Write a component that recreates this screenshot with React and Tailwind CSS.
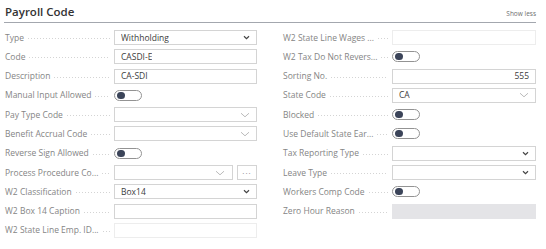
import React from "react";

// Chevron used by option fields (bold) and lookup fields (thin)
function Chevron({ thin }) {
  if (thin) {
    return (
      <svg width="10" height="6" viewBox="0 0 10 6" className="shrink-0">
        <path d="M1 1.2 L5 4.8 L9 1.2" fill="none" stroke="#a8a8a8" strokeWidth="0.8" />
      </svg>
    );
  }
  return (
    <svg width="7" height="5" viewBox="0 0 7 5" className="shrink-0">
      <path d="M1 1.2 L3.5 3.6 L6 1.2" fill="none" stroke="#444" strokeWidth="1.2" />
    </svg>
  );
}

function Toggle() {
  return (
    <div className="w-[28px] h-[11px] rounded-full border border-[#939393] flex items-center px-[1.5px]">
      <div className="w-[8px] h-[7px] rounded-full bg-[#3b4459]" />
    </div>
  );
}

function Field({ f }) {
  if (f.kind === "toggle") return <Toggle />;
  if (f.kind === "disabled") {
    return <div className="w-full h-[15px] bg-[#e4e4e7]" />;
  }
  if (f.kind === "lookup-dots") {
    return (
      <div className="flex w-full gap-[4px]">
        <div className="flex-1 h-[15px] border border-[#d4d4d4] flex items-center justify-between pl-[6px] pr-[7px] bg-white">
          <span>{f.value}</span>
          <Chevron thin />
        </div>
        <div className="w-[20px] h-[15px] border border-[#d4d4d4] flex items-center justify-center text-[#8a8a8a] text-[8px] leading-none tracking-[1px] pb-[3px]">
          ...
        </div>
      </div>
    );
  }
  const border = f.kind === "readonly" ? "border-[#ededed]" : "border-[#d4d4d4]";
  return (
    <div
      className={`w-full h-[15px] border ${border} flex items-center pl-[6px] pr-[6px] bg-white ${
        f.right ? "justify-end" : "justify-between"
      }`}
    >
      <span className="truncate">{f.value}</span>
      {f.kind === "option" && <Chevron />}
      {f.kind === "lookup" && <Chevron thin />}
    </div>
  );
}

function Row({ f }) {
  return (
    <div className="flex items-center h-[15px]">
      <div className="w-[109px] shrink-0 flex items-center text-[#858585]">
        <span className="whitespace-nowrap">{f.label}</span>
        <span className="flex-1 h-px ml-[4px] mr-[4px] mt-[2px] bg-[linear-gradient(to_right,#d4d4d4_1px,transparent_1px)] bg-[length:3px_1px] bg-repeat-x" />
      </div>
      <div className="flex-1 min-w-0 text-[#3c3c3c]">
        <Field f={f} />
      </div>
    </div>
  );
}

const left = [
  { label: "Type", kind: "option", value: "Withholding" },
  { label: "Code", kind: "text", value: "CASDI-E" },
  { label: "Description", kind: "text", value: "CA-SDI" },
  { label: "Manual Input Allowed", kind: "toggle" },
  { label: "Pay Type Code", kind: "lookup", value: "" },
  { label: "Benefit Accrual Code", kind: "lookup", value: "" },
  { label: "Reverse Sign Allowed", kind: "toggle" },
  { label: "Process Procedure Co...", kind: "lookup-dots", value: "" },
  { label: "W2 Classification", kind: "option", value: "Box14" },
  { label: "W2 Box 14 Caption", kind: "text", value: "" },
  { label: "W2 State Line Emp. ID...", kind: "readonly", value: "" },
];

const right = [
  { label: "W2 State Line Wages ...", kind: "readonly", value: "" },
  { label: "W2 Tax Do Not Revers...", kind: "toggle" },
  { label: "Sorting No.", kind: "text", value: "555", right: true },
  { label: "State Code", kind: "lookup", value: "CA" },
  { label: "Blocked", kind: "toggle" },
  { label: "Use Default State Ear...", kind: "toggle" },
  { label: "Tax Reporting Type", kind: "option", value: "" },
  { label: "Leave Type", kind: "option", value: "" },
  { label: "Workers Comp Code", kind: "toggle" },
  { label: "Zero Hour Reason", kind: "disabled" },
];

export default function App() {
  return (
    <div
      className="w-[546px] h-[249px] bg-white overflow-hidden pl-[4px] pr-[10px] text-[8.5px] leading-[10px]"
      style={{ fontFamily: '"Open Sans", "Noto Sans", sans-serif' }}
    >
      {/* Header */}
      <div className="flex items-end justify-between border-b border-[#a3a7ae] pt-[5px] pb-[3px] pl-[1px]">
        <span className="text-[11.5px] leading-[14px] font-semibold text-[#333]">Payroll Code</span>
        <span className="text-[6.5px] leading-[8px] text-[#6e6e6e] mb-[1px]">Show less</span>
      </div>

      {/* Fields */}
      <div className="flex gap-[26px] mt-[7px] pl-[1px]">
        <div className="w-[252px] flex flex-col gap-[4.3px]">
          {left.map((f) => (
            <Row key={f.label} f={f} />
          ))}
        </div>
        <div className="flex-1 flex flex-col gap-[4.3px]">
          {right.map((f) => (
            <Row key={f.label} f={f} />
          ))}
        </div>
      </div>
    </div>
  );
}
